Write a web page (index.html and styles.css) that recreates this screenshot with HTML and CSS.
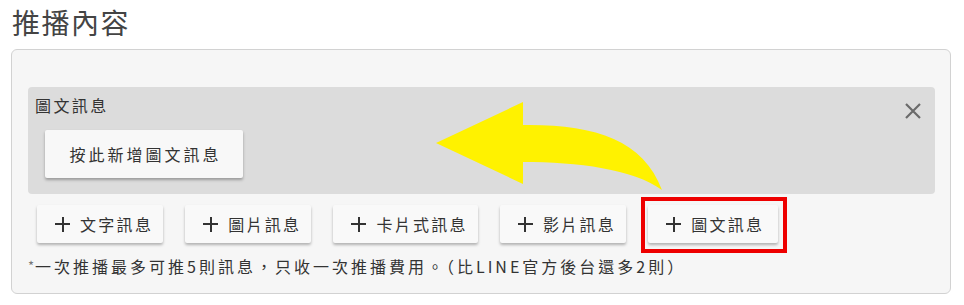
FILE: index.html
```html
<!DOCTYPE html>
<html lang="zh-Hant">
<head>
  <meta charset="UTF-8" />
  <meta name="viewport" content="width=device-width, initial-scale=1.0"/>
  <title>推播內容</title>
  <link rel="stylesheet" href="styles.css">
</head>
<body>
  <h1 class="page-title">推播內容</h1>

  <!-- Push content box -->
  <section class="push-box">
    <div class="imagemap-panel">
      <div class="panel-label">圖文訊息</div>
      <button class="add-imagemap">按此新增圖文訊息</button>
      <button class="panel-close" aria-label="close">
        <svg width="18" height="18" viewBox="0 0 18 18"><path d="M2 2 L16 16 M16 2 L2 16" stroke="#6b6b6b" stroke-width="2.2" fill="none"/></svg>
      </button>
      <!-- hint arrow -->
      <svg class="hint-arrow" width="240" height="100" viewBox="0 0 240 100">
        <path d="M8 46 L95 5 L95 28 C165 27 215 42 234 93 C205 72 150 65 95 65 L95 87 Z" fill="#fff200"/>
      </svg>
    </div>

    <div class="type-buttons">
      <button class="type-btn"><span class="plus"></span>文字訊息</button>
      <button class="type-btn"><span class="plus"></span>圖片訊息</button>
      <button class="type-btn"><span class="plus"></span>卡片式訊息</button>
      <button class="type-btn"><span class="plus"></span>影片訊息</button>
      <button class="type-btn highlight"><span class="plus"></span>圖文訊息</button>
    </div>

    <p class="push-note"><span class="star">*</span>一次推播最多可推5則訊息，只收一次推播費用。（比LINE官方後台還多2則）</p>
  </section>
</body>
</html>
```

FILE: styles.css
```css
/* Base */
* {
  margin: 0;
  padding: 0;
  box-sizing: border-box;
}

body {
  font-family: "Noto Sans CJK TC", "Noto Sans", sans-serif;
  background: #ffffff;
  color: #333;
  padding-left: 11px;
}

.page-title {
  font-size: 28px;
  font-weight: 400;
  line-height: 36px;
  letter-spacing: 1.5px;
  color: #444;
  margin-top: 4px;
  margin-left: 1px;
}

/* Outer box */
.push-box {
  width: 940px;
  height: 245px;
  margin-top: 9px;
  background: #f6f6f6;
  border: 1px solid #d2d2d2;
  border-radius: 6px;
  padding: 37px 15px 0 16px;
}

/* Gray panel */
.imagemap-panel {
  position: relative;
  height: 107px;
  background: #dcdcdc;
  border-radius: 4px;
  padding: 7px 7px;
}

.panel-label {
  font-size: 16px;
  line-height: 22px;
  letter-spacing: 2.4px;
  color: #333;
}

.add-imagemap {
  display: block;
  width: 198px;
  height: 48px;
  margin: 14px 0 0 10px;
  padding-left: 3px;
  font-family: inherit;
  font-size: 16px;
  letter-spacing: 3px;
  color: #333;
  background: #f8f8f8;
  border: none;
  border-radius: 2px;
  box-shadow: 0 2px 3px rgba(0, 0, 0, 0.3);
}

.panel-close {
  position: absolute;
  top: 15px;
  right: 13px;
  width: 18px;
  height: 18px;
  background: none;
  border: none;
}

.panel-close svg {
  display: block;
}

.hint-arrow {
  position: absolute;
  left: 400px;
  top: 10px;
}

/* Type buttons */
.type-buttons {
  display: flex;
  gap: 22px;
  margin: 11px 0 0 9px;
}

.type-btn {
  position: relative;
  display: flex;
  align-items: center;
  height: 38px;
  padding: 0 10px 0 18px;
  font-family: inherit;
  font-size: 16px;
  letter-spacing: 2.3px;
  color: #333;
  background: #f9f9f9;
  border: none;
  border-radius: 2px;
  box-shadow: 0 2px 3px rgba(0, 0, 0, 0.28);
}

.type-btn.highlight {
  padding-right: 14px;
}

.plus {
  position: relative;
  width: 15px;
  height: 15px;
  margin-right: 10px;
}

.plus::before,
.plus::after {
  content: "";
  position: absolute;
  background: #333;
}

.plus::before {
  left: 0;
  right: 0;
  top: 6.5px;
  height: 2px;
}

.plus::after {
  top: 0;
  bottom: 0;
  left: 6.5px;
  width: 2px;
}

.type-btn.highlight::after {
  content: "";
  position: absolute;
  left: -7px;
  top: -8px;
  right: -9px;
  bottom: -10px;
  border: 4px solid #ee0000;
}

/* Footnote */
.push-note {
  margin-top: 11px;
  font-size: 16px;
  line-height: 24px;
  letter-spacing: 3px;
  color: #333;
}

.star {
  font-size: 13px;
  color: #777;
  vertical-align: 2px;
  letter-spacing: 1px;
}
```
